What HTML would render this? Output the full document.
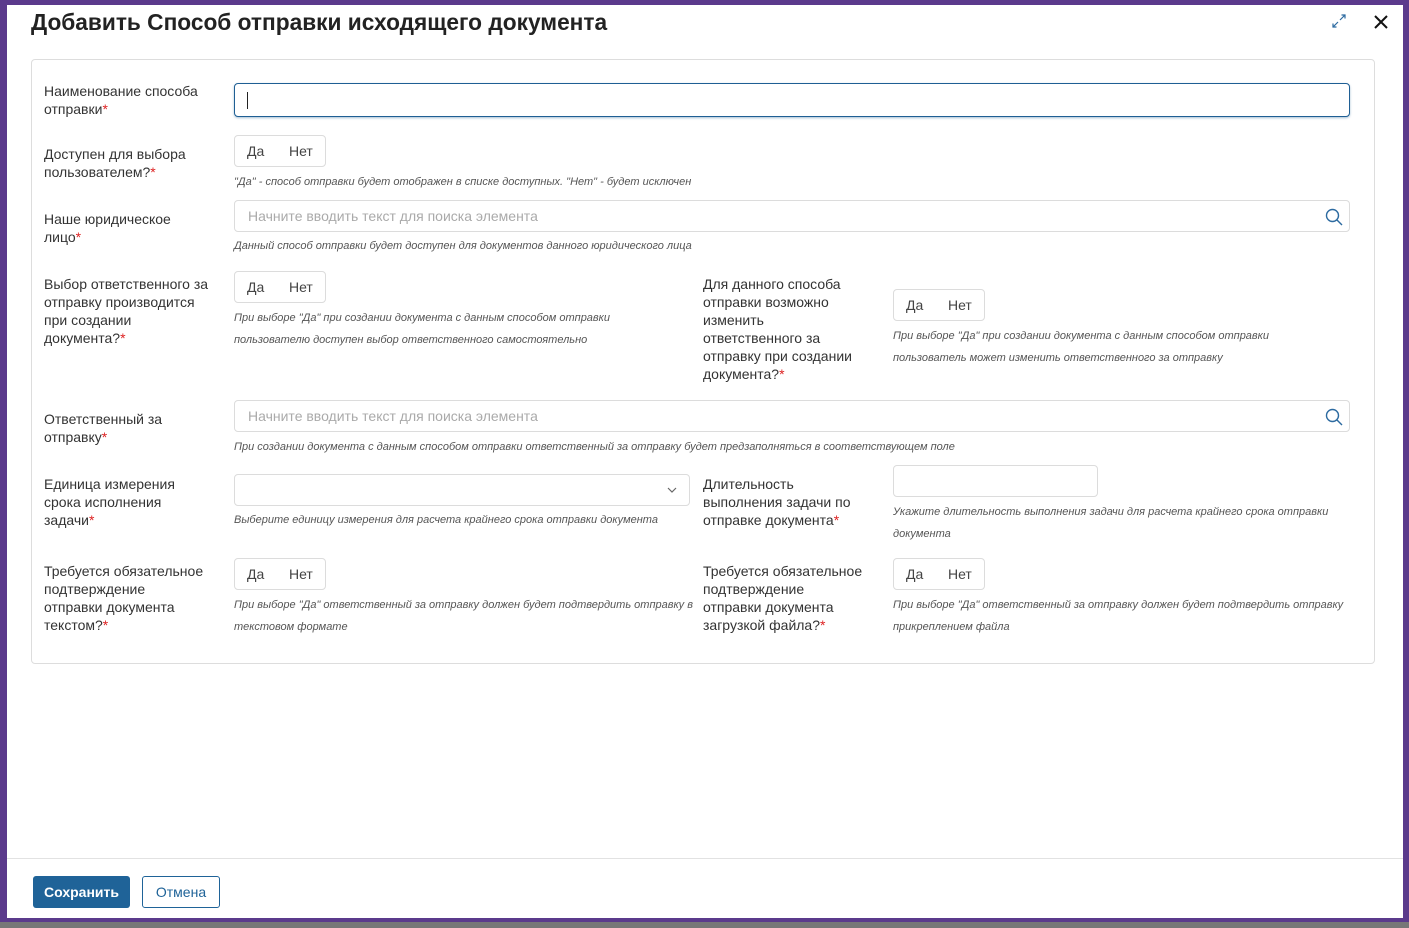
<!DOCTYPE html>
<html><head><meta charset="utf-8"><style>
*{margin:0;padding:0;box-sizing:border-box}
body{width:1409px;height:928px;background:#5b3a8c;position:relative;overflow:hidden;font-family:"Liberation Sans",sans-serif;color:#333}
.dlg{position:absolute;left:7px;top:5px;width:1396px;height:913px;background:#fff}
.bot{position:absolute;left:0;top:922px;width:1409px;height:6px;background:#777}
.a{position:absolute}
.title{left:31px;top:9px;font-size:22.7px;font-weight:bold;color:#222}
.card{left:31px;top:59px;width:1344px;height:605px;border:1px solid #ddd;border-radius:4px}
.lb{font-size:14px;line-height:18px;color:#333}
.lb i{color:#d22;font-style:normal}
.inp{border:1px solid #dcdcdc;border-radius:4px;background:#fff}
.tg{border:1px solid #dcdcdc;border-radius:4px;width:92px;height:32px;font-size:14px;color:#444}
.tg span{position:absolute;top:7px}
.h{font-size:11px;font-style:italic;color:#555;line-height:22px}
.ph{position:absolute;left:13px;top:7px;font-size:14px;color:#aaa}
</style></head><body>
<div class="dlg"></div>
<div class="bot"></div>
<div class="a title">Добавить Способ отправки исходящего документа</div>
<svg class="a" style="left:1331px;top:13px" width="16" height="16" viewBox="0 0 16 16" fill="none" stroke="#2c6aa0" stroke-width="1.2"><path d="M9 7L14 2M10.5 2H14V5.5M7 9L2 14M2 10.5V14H5.5"/></svg>
<svg class="a" style="left:1373px;top:14px" width="16" height="16" viewBox="0 0 16 16" stroke="#111" stroke-width="2"><path d="M2 2L14 14M14 2L2 14"/></svg>
<div class="a card"></div>

<div class="a lb" style="left:44px;top:82px">Наименование способа<br>отправки<i>*</i></div>
<div class="a inp" style="left:234px;top:83px;width:1116px;height:34px;border-color:#1f5f94;box-shadow:0 1px 2px rgba(31,95,148,.4)"><div class="a" style="left:12px;top:8px;width:1px;height:17px;background:#222"></div></div>

<div class="a lb" style="left:44px;top:145px">Доступен для выбора<br>пользователем?<i>*</i></div>
<div class="a tg" style="left:234px;top:135px"><span style="left:12px">Да</span><span style="left:54px">Нет</span></div>
<div class="a h" style="left:234px;top:171px">"Да" - способ отправки будет отображен в списке доступных. "Нет" - будет исключен</div>

<div class="a lb" style="left:44px;top:210px">Наше юридическое<br>лицо<i>*</i></div>
<div class="a inp" style="left:234px;top:200px;width:1116px;height:32px"><span class="ph">Начните вводить текст для поиска элемента</span>
<svg class="a" style="right:6px;top:7px" width="18" height="18" viewBox="0 0 18 18" fill="none" stroke="#2c6aa0" stroke-width="1.4"><circle cx="7.5" cy="7.5" r="6"/><path d="M12 12L17 17"/></svg></div>
<div class="a h" style="left:234px;top:235px">Данный способ отправки будет доступен для документов данного юридического лица</div>

<div class="a lb" style="left:44px;top:275px">Выбор ответственного за<br>отправку производится<br>при создании<br>документа?<i>*</i></div>
<div class="a tg" style="left:234px;top:271px"><span style="left:12px">Да</span><span style="left:54px">Нет</span></div>
<div class="a h" style="left:234px;top:307px">При выборе "Да" при создании документа с данным способом отправки<br>пользователю доступен выбор ответственного самостоятельно</div>
<div class="a lb" style="left:703px;top:275px">Для данного способа<br>отправки возможно<br>изменить<br>ответственного за<br>отправку при создании<br>документа?<i>*</i></div>
<div class="a tg" style="left:893px;top:289px"><span style="left:12px">Да</span><span style="left:54px">Нет</span></div>
<div class="a h" style="left:893px;top:325px">При выборе "Да" при создании документа с данным способом отправки<br>пользователь может изменить ответственного за отправку</div>

<div class="a lb" style="left:44px;top:410px">Ответственный за<br>отправку<i>*</i></div>
<div class="a inp" style="left:234px;top:400px;width:1116px;height:32px"><span class="ph">Начните вводить текст для поиска элемента</span>
<svg class="a" style="right:6px;top:7px" width="18" height="18" viewBox="0 0 18 18" fill="none" stroke="#2c6aa0" stroke-width="1.4"><circle cx="7.5" cy="7.5" r="6"/><path d="M12 12L17 17"/></svg></div>
<div class="a h" style="left:234px;top:436px">При создании документа с данным способом отправки ответственный за отправку будет предзаполняться в соответствующем поле</div>

<div class="a lb" style="left:44px;top:475px">Единица измерения<br>срока исполнения<br>задачи<i>*</i></div>
<div class="a inp" style="left:234px;top:474px;width:456px;height:32px"><svg class="a" style="right:12px;top:12px" width="10" height="7" viewBox="0 0 10 7" fill="none" stroke="#666" stroke-width="1.2"><path d="M1 1L5 5L9 1"/></svg></div>
<div class="a h" style="left:234px;top:509px">Выберите единицу измерения для расчета крайнего срока отправки документа</div>
<div class="a lb" style="left:703px;top:475px">Длительность<br>выполнения задачи по<br>отправке документа<i>*</i></div>
<div class="a inp" style="left:893px;top:465px;width:205px;height:32px"></div>
<div class="a h" style="left:893px;top:501px">Укажите длительность выполнения задачи для расчета крайнего срока отправки<br>документа</div>

<div class="a lb" style="left:44px;top:562px">Требуется обязательное<br>подтверждение<br>отправки документа<br>текстом?<i>*</i></div>
<div class="a tg" style="left:234px;top:558px"><span style="left:12px">Да</span><span style="left:54px">Нет</span></div>
<div class="a h" style="left:234px;top:594px">При выборе "Да" ответственный за отправку должен будет подтвердить отправку в<br>текстовом формате</div>
<div class="a lb" style="left:703px;top:562px">Требуется обязательное<br>подтверждение<br>отправки документа<br>загрузкой файла?<i>*</i></div>
<div class="a tg" style="left:893px;top:558px"><span style="left:12px">Да</span><span style="left:54px">Нет</span></div>
<div class="a h" style="left:893px;top:594px">При выборе "Да" ответственный за отправку должен будет подтвердить отправку<br>прикреплением файла</div>

<div class="a" style="left:7px;top:858px;width:1396px;height:1px;background:#e2e2e2"></div>
<div class="a" style="left:33px;top:876px;width:97px;height:32px;background:#1f6398;border-radius:3px;color:#fff;font-size:14px;font-weight:bold;text-align:center;line-height:32px">Сохранить</div>
<div class="a" style="left:142px;top:876px;width:78px;height:32px;border:1px solid #1f6398;border-radius:3px;color:#1f6398;font-size:14px;text-align:center;line-height:30px">Отмена</div>
</body></html>
